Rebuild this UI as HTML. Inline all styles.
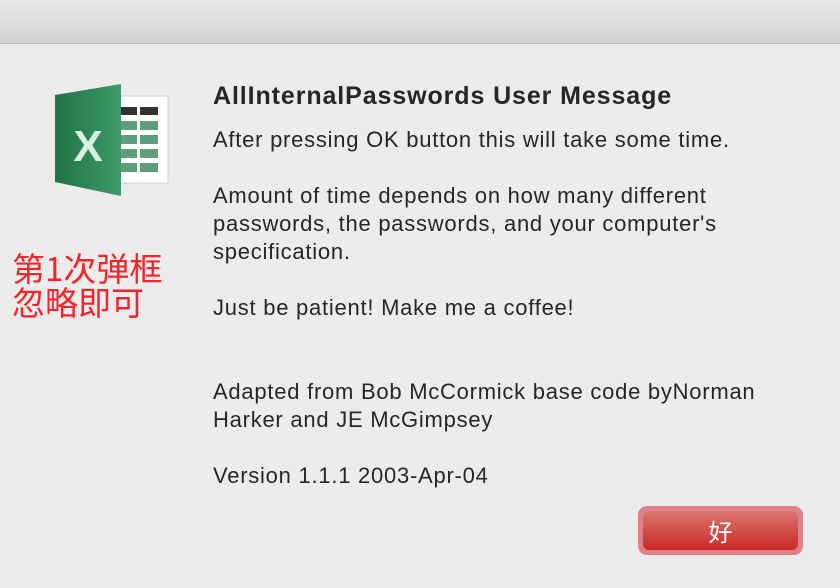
<!DOCTYPE html>
<html><head><meta charset="utf-8"><style>
html,body{margin:0;padding:0;width:840px;height:588px;overflow:hidden;background:#ececec;font-family:"Liberation Sans","Noto Sans CJK SC",sans-serif;}
.tb{position:absolute;left:0;top:0;width:840px;height:43px;background:linear-gradient(#e8e8e8,#d3d3d3);border-bottom:1px solid #b5b5b5;border-radius:6px 6px 0 0;}
.t{position:absolute;left:213px;color:#262626;font-size:22px;letter-spacing:0.75px;white-space:nowrap;}
.title{font-weight:bold;font-size:25px;letter-spacing:0.9px;top:82px;}
.red{position:absolute;left:12px;color:#f5232a;font-size:33px;line-height:34px;top:250px;font-family:"Noto Sans CJK SC",sans-serif;}
.btn{position:absolute;left:638px;top:506px;width:165px;height:49px;border-radius:9px;background:#e08088;}
.btn div{position:absolute;left:5px;top:5px;width:155px;height:39px;border-radius:6px;background:linear-gradient(#dc7470,#c82a26);color:#fff;font-size:24px;text-align:center;line-height:39px;font-family:"Noto Sans CJK SC",sans-serif;}
</style></head><body>
<div class="tb"></div>
<svg style="position:absolute;left:0;top:0" width="200" height="220">
<defs><linearGradient id="g" x1="0" x2="1"><stop offset="0" stop-color="#1f7344"/><stop offset="1" stop-color="#3f9a68"/></linearGradient></defs>
<rect x="118" y="96" width="50" height="87" fill="#fff" stroke="#d0d0d0"/>
<rect x="121" y="107" width="16" height="8" fill="#333"/><rect x="140" y="107" width="18" height="8" fill="#333"/>
<g fill="#5e9e7c"><rect x="121" y="121" width="16" height="9"/><rect x="140" y="121" width="18" height="9"/>
<rect x="121" y="135" width="16" height="9"/><rect x="140" y="135" width="18" height="9"/>
<rect x="121" y="149" width="16" height="9"/><rect x="140" y="149" width="18" height="9"/>
<rect x="121" y="163" width="16" height="9"/><rect x="140" y="163" width="18" height="9"/></g>
<polygon points="55,95 121,84 121,196 55,182" fill="url(#g)"/>
<text x="88" y="161" fill="#d9efe2" font-family="Liberation Sans" font-weight="bold" font-size="44" text-anchor="middle">X</text>
</svg>
<div class="red">第1次弹框<br>忽略即可</div>
<div class="t title">AllInternalPasswords User Message</div>
<div class="t" style="top:127px">After pressing OK button this will take some time.</div>
<div class="t" style="top:183px">Amount of time depends on how many different</div>
<div class="t" style="top:211px">passwords, the passwords, and your computer's</div>
<div class="t" style="top:239px">specification.</div>
<div class="t" style="top:295px">Just be patient! Make me a coffee!</div>
<div class="t" style="top:379px">Adapted from Bob McCormick base code byNorman</div>
<div class="t" style="top:407px">Harker and JE McGimpsey</div>
<div class="t" style="top:463px">Version 1.1.1 2003-Apr-04</div>
<div class="btn"><div>好</div></div>
</body></html>
